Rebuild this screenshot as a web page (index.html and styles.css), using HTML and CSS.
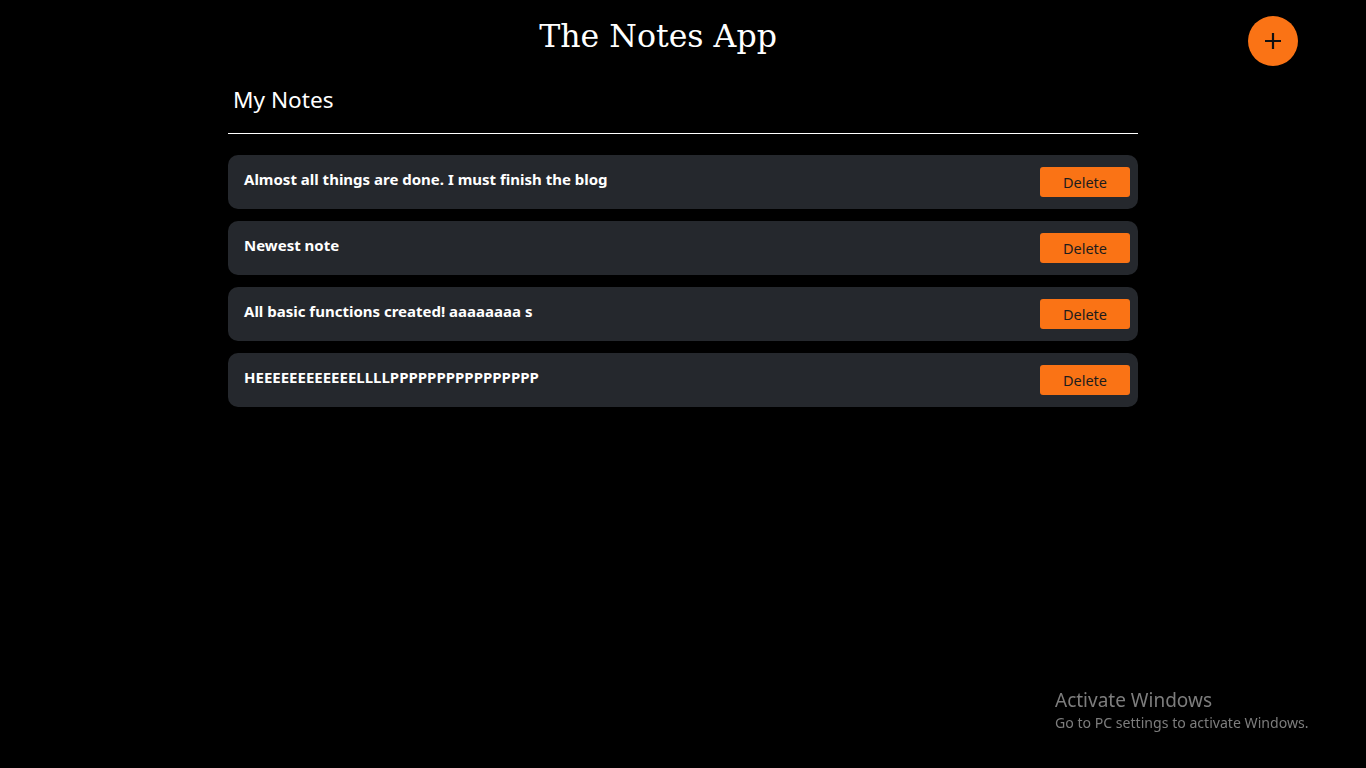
FILE: index.html
```html
<!DOCTYPE html>
<html lang="en">
<head>
<meta charset="utf-8">
<title>The Notes App</title>
<link rel="stylesheet" href="styles.css">
</head>
<body>
<header class="header">
  <h1 class="title">The Notes App</h1>
</header>
<button class="fab" aria-label="Add note">
  <svg width="20" height="20" viewBox="0 0 20 20"><path d="M10 2v16M2 10h16" stroke="#111" stroke-width="2.2" fill="none"/></svg>
</button>
<main class="container">
  <h2 class="section-title">My Notes</h2>
  <div class="divider"></div>
  <ul class="notes">
    <li class="note"><span class="note-text">Almost all things are done. I must finish the blog</span><button class="delete">Delete</button></li>
    <li class="note"><span class="note-text">Newest note</span><button class="delete">Delete</button></li>
    <li class="note"><span class="note-text">All basic functions created! aaaaaaaa s</span><button class="delete">Delete</button></li>
    <li class="note"><span class="note-text">HEEEEEEEEEEEELLLLPPPPPPPPPPPPPPPP</span><button class="delete">Delete</button></li>
  </ul>
</main>
<div class="watermark">
  <div class="wm-title">Activate Windows</div>
  <div class="wm-sub">Go to PC settings to activate Windows.</div>
</div>
</body>
</html>
```

FILE: styles.css
```css
html, body {
  margin: 0;
  padding: 0;
  background: #000;
  height: 100%;
}
body {
  font-family: "Noto Sans", "Open Sans", sans-serif;
  color: #fff;
  overflow: hidden;
}
.header {
  display: flex;
  justify-content: center;
  padding-right: 50px;
  padding-top: 14px;
}
.title {
  margin: 0;
  font-family: "DejaVu Serif", "Liberation Serif", serif;
  font-weight: normal;
  font-size: 31.6px;
  line-height: 44px;
  color: #fff;
}
.fab {
  position: fixed;
  top: 16px;
  right: 68px;
  width: 50px;
  height: 50px;
  border-radius: 50%;
  border: none;
  background: #fa7315;
  display: flex;
  align-items: center;
  justify-content: center;
  padding: 0;
}
.container {
  width: 910px;
  margin: 0 auto;
  padding-top: 27px;
}
.section-title {
  margin: 0 0 0 5px;
  font-size: 22.6px;
  font-weight: normal;
  line-height: 30px;
}
.divider {
  height: 1px;
  background: #fff;
  margin-top: 18px;
}
.notes {
  list-style: none;
  margin: 21px 0 0;
  padding: 0;
  display: flex;
  flex-direction: column;
  gap: 12px;
}
.note {
  height: 54px;
  box-sizing: border-box;
  background: #25282d;
  border-radius: 10px;
  display: flex;
  align-items: center;
  justify-content: space-between;
  padding: 0 8px 0 16px;
}
.note-text {
  font-weight: bold;
  font-size: 15px;
  margin-top: -6px;
}
.delete {
  width: 90px;
  height: 30px;
  border: none;
  border-radius: 3px;
  background: #fa7315;
  color: #1c1c1c;
  font-family: "Noto Sans", "Open Sans", sans-serif;
  font-size: 14.5px;
  padding: 0;
}
.watermark {
  position: fixed;
  left: 1055px;
  top: 688px;
  color: #7d7d7d;
}
.wm-title {
  font-size: 19px;
  line-height: 24px;
}
.wm-sub {
  font-size: 14.1px;
  line-height: 22px;
}
```
